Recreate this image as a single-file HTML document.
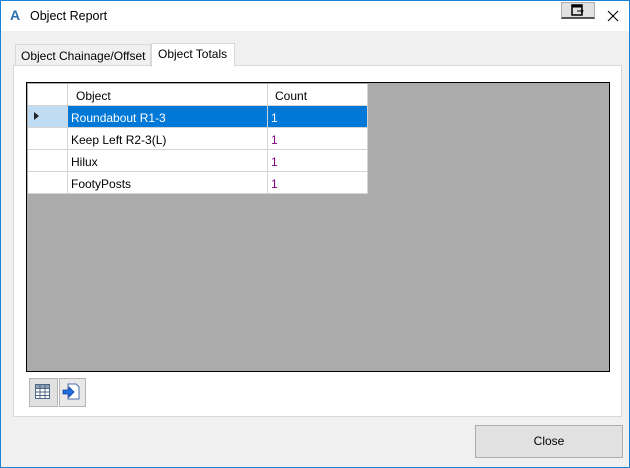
<!DOCTYPE html>
<html><head><style>
*{margin:0;padding:0;box-sizing:border-box}
body{width:630px;height:468px;position:relative;background:#f0f0f0;font-family:"Liberation Sans",sans-serif;font-size:12px;color:#000;overflow:hidden}
.abs{position:absolute}
</style></head><body>
<div class="abs" style="left:0;top:0;width:630px;height:468px;border:1px solid #1883d7"></div>
<div class="abs" style="left:1px;top:1px;width:628px;height:30px;background:#fff"></div>
<div class="abs" style="left:10px;top:7px;font-weight:bold;color:#2a6fb0;font-size:14px">A</div>
<div class="abs" style="left:30px;top:9px;font-size:12.5px">Object Report</div>
<div class="abs" style="left:561px;top:2px;width:34px;height:17px;background:#e1e1e1;border:1px solid #adadad;border-bottom:2px solid #555"></div>
<svg class="abs" style="left:571px;top:4px" width="14" height="12"><rect x="1" y="1" width="10" height="10" fill="none" stroke="#000" stroke-width="1.5"/><line x1="1" y1="2.5" x2="11" y2="2.5" stroke="#000" stroke-width="2"/><path d="M6 7h6M10 5l2 2-2 2" stroke="#000" fill="none"/></svg>
<svg class="abs" style="left:607px;top:10px" width="12" height="12"><path d="M1 1L11 11M11 1L1 11" stroke="#000" stroke-width="1.1"/></svg>
<!-- tabs -->
<div class="abs" style="left:15px;top:44px;width:136px;height:22px;background:#f0f0f0;border:1px solid #d9d9d9;border-bottom:none"></div>
<div class="abs" style="left:21px;top:49px">Object Chainage/Offset</div>
<div class="abs" style="left:13px;top:65px;width:609px;height:352px;background:#fff;border:1px solid #d9d9d9"></div>
<div class="abs" style="left:151px;top:43px;width:84px;height:24px;background:#fff;border:1px solid #d9d9d9;border-bottom:none"></div>
<div class="abs" style="left:158px;top:47px">Object Totals</div>
<!-- grid -->
<div class="abs" style="left:26px;top:82px;width:584px;height:290px;background:#ababab;border:1px solid #000"></div>
<div class="abs" style="left:28px;top:84px;width:340px;height:110px;background:#fff"></div>
<div class="abs" style="left:28px;top:106px;width:39px;height:21px;background:#bfdcf3"></div>
<div class="abs" style="left:34px;top:112px;width:0;height:0;border-left:5px solid #222;border-top:4.5px solid transparent;border-bottom:4.5px solid transparent"></div>
<div class="abs" style="left:68px;top:106px;width:299px;height:21px;background:#0078d7"></div>
<svg class="abs" style="left:28px;top:84px" width="341" height="110">
<g stroke="#d4d4d4" stroke-width="1">
<line x1="39.5" y1="0" x2="39.5" y2="110"/><line x1="239.5" y1="0" x2="239.5" y2="110"/><line x1="339.5" y1="0" x2="339.5" y2="110"/>
<line x1="0" y1="21.5" x2="340" y2="21.5"/><line x1="0" y1="43.5" x2="340" y2="43.5"/><line x1="0" y1="65.5" x2="340" y2="65.5"/><line x1="0" y1="87.5" x2="340" y2="87.5"/><line x1="0" y1="109.5" x2="340" y2="109.5"/>
</g></svg>
<div class="abs" style="left:76px;top:89px">Object</div>
<div class="abs" style="left:275px;top:89px">Count</div>
<div class="abs" style="left:71px;top:111px;color:#fff">Roundabout R1-3</div>
<div class="abs" style="left:271px;top:111px;color:#fff">1</div>
<div class="abs" style="left:71px;top:133px">Keep Left R2-3(L)</div>
<div class="abs" style="left:271px;top:133px;color:#800080">1</div>
<div class="abs" style="left:71px;top:155px">Hilux</div>
<div class="abs" style="left:271px;top:155px;color:#800080">1</div>
<div class="abs" style="left:71px;top:177px">FootyPosts</div>
<div class="abs" style="left:271px;top:177px;color:#800080">1</div>
<!-- buttons -->
<div class="abs" style="left:29px;top:378px;width:29px;height:29px;background:#e1e1e1;border:1px solid #b5b5b5"></div>
<svg class="abs" style="left:35px;top:384px" width="16" height="16"><rect x="0.5" y="0.5" width="14" height="14" fill="#fff" stroke="#4d6785"/><rect x="0.5" y="0.5" width="14" height="4" fill="#8ba0b8" stroke="#4d6785"/><g stroke="#4d6785"><line x1="5" y1="0" x2="5" y2="15"/><line x1="10" y1="0" x2="10" y2="15"/><line x1="0" y1="8" x2="15" y2="8"/><line x1="0" y1="11.5" x2="15" y2="11.5"/></g></svg>
<div class="abs" style="left:59px;top:378px;width:27px;height:29px;background:#e9e9e9;border:1px solid #b5b5b5"></div>
<svg class="abs" style="left:62px;top:383px" width="20" height="18"><path d="M6 1h8l3 3v12H6z" fill="#fff" stroke="#4a6fa5"/><path d="M1 7h6V4l5 5-5 5v-3H1z" fill="#1f6fe0" stroke="#1040a0" stroke-width="0.8"/></svg>
<!-- close -->
<div class="abs" style="left:475px;top:425px;width:148px;height:33px;background:#e1e1e1;border:1px solid #adadad"></div>
<div class="abs" style="left:475px;top:434px;width:148px;text-align:center">Close</div>
</body></html>
